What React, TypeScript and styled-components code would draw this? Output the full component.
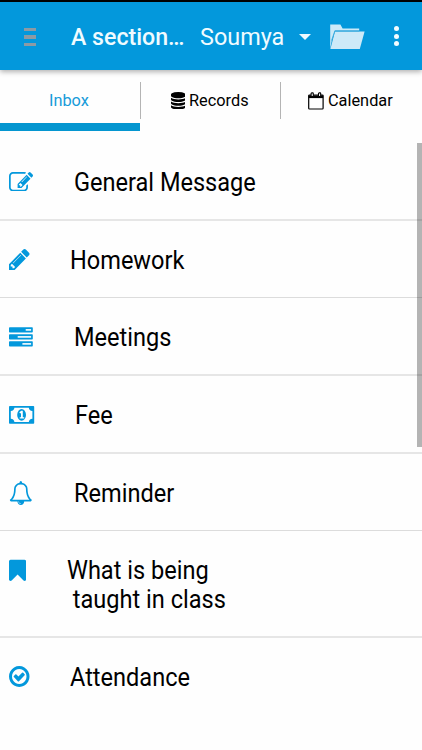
import React from "react";
import styled, { createGlobalStyle } from "styled-components";

const Global = createGlobalStyle`
  * { box-sizing: border-box; }
  body { margin: 0; background: #fff; font-family: Roboto, "Liberation Sans", sans-serif; overflow: hidden; }
  svg { display: block; flex: none; }
`;

const blue = "#0398dc";

const Screen = styled.div`
  width: 422px;
  height: 750px;
  display: flex;
  flex-direction: column;
  overflow: hidden;
  background: #fefefe;
  color: #000;
`;
const StatusStrip = styled.div`
  height: 2px;
  flex: none;
  background: #000;
`;
const AppBar = styled.header`
  height: 68px;
  flex: none;
  display: flex;
  align-items: center;
  padding: 2px 0 0 23.5px;
  background: ${blue};
  color: #f0fbff;
  box-shadow: 0 2px 5px rgba(0, 0, 0, 0.3);
  z-index: 1;
`;
const MenuButton = styled.div`
  width: 12px;
  margin-right: 35px;
  display: grid;
  gap: 4px;
`;
const MenuBar = styled.span`
  height: 3.4px;
  background: #8d9aa3;
`;
const Title = styled.h1`
  margin: 0;
  width: 129.5px;
  font-size: 23.5px;
  line-height: 30px;
  font-weight: 500;
  white-space: nowrap;
  transform: scaleX(0.985);
  transform-origin: left;
`;
const Student = styled.div`
  width: 99px;
  font-size: 24.5px;
  line-height: 30px;
  white-space: nowrap;
  transform: scaleX(0.955);
  transform-origin: left;
`;
const Caret = styled.span`
  border: 6px solid transparent;
  border-top-color: #effaff;
  border-bottom: 0;
  margin-right: 18.5px;
`;
const Dots = styled.div`
  display: grid;
  gap: 2.4px;
  margin: 0 0 2px 29px;
`;
const Dot = styled.span`
  width: 5px;
  height: 5px;
  border-radius: 50%;
  background: #f4fcff;
`;

const Tabs = styled.nav`
  height: 61px;
  flex: none;
  display: grid;
  grid-template-columns: 140px 140px 142px;
  padding-top: 12px;
`;
const Tab = styled.div<{ $active?: boolean }>`
  height: 49px;
  border-bottom: 8px solid ${(p) => (p.$active ? "#0596d0" : "transparent")};
  color: ${(p) => (p.$active ? "#189bd9" : "#000")};
`;
const TabContent = styled.div<{ $divided?: boolean; $start: number; $gap?: number }>`
  height: 37px;
  display: flex;
  align-items: center;
  gap: ${(p) => p.$gap ?? 0}px;
  padding-left: ${(p) => p.$start}px;
  border-left: ${(p) => (p.$divided ? "1px solid #b4b4b4" : "0")};
`;
const TabLabel = styled.span`
  font-size: 17px;
  line-height: 20px;
  padding-bottom: 2px;
  transform: scaleX(0.96);
  transform-origin: left;
`;

const Body = styled.main`
  flex: 1;
  display: flex;
  position: relative;
  padding-top: 12px;
`;
const List = styled.ul`
  flex: 1;
  margin: 0;
  padding: 0;
  list-style: none;
`;
const Row = styled.li<{ $h: number; $line: number }>`
  height: ${(p) => p.$h}px;
  display: flex;
  align-items: flex-start;
  padding: 25px 0 0 9.3px;
  border-bottom: ${(p) => p.$line}px solid ${(p) => (p.$line > 1 ? "#e6e6e6" : "#dcdcdc")};
`;
const IconCell = styled.div<{ $indent: number }>`
  width: ${(p) => p.$indent - 9}px;
  height: 27px;
  flex: none;
  display: flex;
  align-items: center;
  color: ${blue};
`;
const Label = styled.div`
  padding-top: 1px;
  font-size: 25px;
  line-height: 28.7px;
  white-space: pre;
  transform: scaleX(0.942);
  transform-origin: left;
`;
const ScrollThumb = styled.div`
  position: absolute;
  right: 0;
  top: 12px;
  width: 5px;
  height: 304px;
  background: rgba(0, 0, 0, 0.29);
`;

const Glyph = ({ box, w, h, d }: { box: string; w: number; h: number; d: string }) => (
  <svg width={w} height={h} viewBox={box} preserveAspectRatio="none" fill="currentColor">
    <path d={d} />
  </svg>
);

const Edit = () => (
  <Glyph box="0 128 1784 1408" w={24} h={19.5} d="M888 1184l116-116-152-152-116 116v56h96v96h56zm440-720q-16-16-33 1l-350 350q-17 17-1 33t33-1l350-350q17-17 1-33zm80 594v190q0 119-84.5 203.5t-203.5 84.5h-832q-119 0-203.5-84.5t-84.5-203.5v-832q0-119 84.5-203.5t203.5-84.5h832q63 0 117 25 15 7 18 23 3 17-9 29l-49 49q-14 14-32 8-23-6-45-6h-832q-66 0-113 47t-47 113v832q0 66 47 113t113 47h832q66 0 113-47t47-113v-126q0-13 9-22l64-64q15-15 35-7t20 29zm-96-738l288 288-672 672h-288v-288zm444 132l-92 92-288-288 92-92q28-28 68-28t68 28l152 152q28 28 28 68t-28 68z" />
);
const Pencil = () => (
  <Glyph box="128 149 1515 1515" w={20.5} h={21} d="M491 1536l91-91-235-235-91 91v107h128v128h107zm523-928q0-22-22-22-10 0-17 7l-542 542q-7 7-7 17 0 22 22 22 10 0 17-7l542-542q7-7 7-17zm-54-192l416 416-832 832h-416v-416zm683 96q0 53-37 90l-166 166-416-416 166-165q36-38 90-38 53 0 91 38l235 234q37 39 37 91z" />
);
const Bell = () => (
  <Glyph box="0 0 1728 1792" w={22.8} h={24} d="M912 1696q0-16-16-16-59 0-101.5-42.5t-42.5-101.5q0-16-16-16t-16 16q0 73 51.5 124.5t124.5 51.5q16 0 16-16zm-666-288h1300q-266-300-266-832 0-51-24-105t-69-103-121.5-80.5-169.5-31.5-169.5 31.5-121.5 80.5-69 103-24 105q0 532-266 832zm1482 0q0 52-38 90t-90 38h-448q0 106-75 181t-181 75-181-75-75-181h-448q-52 0-90-38t-38-90q50-42 91-88t85-119.5 74.5-158.5 50-206 19.5-260q0-152 117-282.5t307-158.5q-8-19-8-39 0-40 28-68t68-28 68 28 28 68q0 20-8 39 190 28 307 158.5t117 282.5q0 139 19.5 260t50 206 74.5 158.5 85 119.5 91 88z" />
);
const Bookmark = () => (
  <Glyph box="256 68 1280 1573" w={17.2} h={22} d="M1420 128q23 0 44 9 33 13 52.5 41t19.5 62v1289q0 34-19.5 62t-52.5 41q-19 8-44 8-48 0-83-32l-441-424-441 424q-36 33-83 33-23 0-44-9-33-13-52.5-41t-19.5-62v-1289q0-34 19.5-62t52.5-41q21-9 44-9h1048z" />
);
const Check = () => (
  <Glyph box="128 128 1536 1536" w={20.5} h={21} d="M1299 813l-422 422q-19 19-45 19t-45-19l-294-294q-19-19-19-45t19-45l102-102q19-19 45-19t45 19l147 147 275-275q19-19 45-19t45 19l102 102q19 19 19 45t-19 45zm141 83q0-148-73-273t-198-198-273-73-273 73-198 198-73 273 73 273 198 198 273 73 273-73 198-198 73-273zm224 0q0 209-103 385.5t-279.5 279.5-385.5 103-385.5-103-279.5-279.5-103-385.5 103-385.5 279.5-279.5 385.5-103 385.5 103 279.5 279.5 103 385.5z" />
);
const Database = () => (
  <Glyph box="128 0 1536 1792" w={14.5} h={17.5} d="M896 768q237 0 443-43t325-127v170q0 69-103 128t-280 93.5-385 34.5-385-34.5-280-93.5-103-128v-170q119 84 325 127t443 43zm0 768q237 0 443-43t325-127v170q0 69-103 128t-280 93.5-385 34.5-385-34.5-280-93.5-103-128v-170q119 84 325 127t443 43zm0-384q237 0 443-43t325-127v170q0 69-103 128t-280 93.5-385 34.5-385-34.5-280-93.5-103-128v-170q119 84 325 127t443 43zm0-1152q208 0 385 34.5t280 93.5 103 128v128q0 69-103 128t-280 93.5-385 34.5-385-34.5-280-93.5-103-128v-128q0-69 103-128t280-93.5 385-34.5z" />
);
const Tasks = () => (
  <svg width="24" height="20" viewBox="0 0 24 20">
    <g fill="currentColor">
      <rect x="0" y=".2" width="23.8" height="5.4" rx=".8" />
      <rect x="0" y="7.2" width="23.8" height="5.4" rx=".8" />
      <rect x="0" y="14.2" width="23.8" height="5.4" rx=".8" />
    </g>
    <g fill="#fefefe">
      <rect x="16.7" y="2.1" width="5.4" height="1.6" />
      <rect x="8.7" y="9.1" width="13.4" height="1.6" />
      <rect x="13.4" y="16.1" width="8.7" height="1.6" />
    </g>
  </svg>
);
const Money = () => (
  <svg width="26" height="18" viewBox="0 0 26 18">
    <rect width="25.2" height="17.8" rx=".8" fill="currentColor" />
    <path d="M5.4 1.7h14.4q.3 3 3.6 3.4v7.6q-3.3.4-3.6 3.4H5.4q-.3-3-3.6-3.4V5.1q3.3-.4 3.6-3.4z" fill="#fefefe" />
    <ellipse cx="12.6" cy="8.9" rx="4.4" ry="5.9" fill="currentColor" />
    <path d="M10.3 6.3l2-1.6h1.5v6.5h1.4v1.4h-4.5v-1.4H12V6.9l-.9.7z" fill="#fefefe" />
  </svg>
);
const Calendar = () => (
  <svg width="16" height="18" viewBox="0 0 16 18" fill="none" stroke="currentColor">
    <rect x=".7" y="3" width="14.4" height="14" rx=".8" strokeWidth="1.2" />
    <path d="M.6 4.7h14.6" strokeWidth="2.8" />
    <rect x="3.1" y=".9" width="2.2" height="3.6" rx=".7" fill="#fefefe" strokeWidth="1.1" />
    <rect x="10.5" y=".9" width="2.2" height="3.6" rx=".7" fill="#fefefe" strokeWidth="1.1" />
  </svg>
);
const Folder = () => (
  <svg width="35" height="26" viewBox="0 0 35 26">
    <path d="M.2 25V.4h10.2l2.2 4h16.6v2.2H4.8L1.8 16z" fill="#cdeaf8" />
    <path d="M5 7.5h29.6L29.8 25H.4z" fill="#cdeaf8" />
    <path d="M1.6 16.5L4.8 7.1h24.6" fill="none" stroke="#3fadde" strokeWidth=".9" />
  </svg>
);

const items = [
  { label: "General Message", icon: <Edit />, indent: 73.9, h: 78, line: 2 },
  { label: "Homework", icon: <Pencil />, indent: 70.2, h: 77, line: 1 },
  { label: "Meetings", icon: <Tasks />, indent: 73.6, h: 78, line: 2 },
  { label: "Fee", icon: <Money />, indent: 75.2, h: 78, line: 2 },
  { label: "Reminder", icon: <Bell />, indent: 73.6, h: 77, line: 1 },
  { label: "What is being\n taught in class", icon: <Bookmark />, indent: 67.2, h: 107, line: 2 },
  { label: "Attendance", icon: <Check />, indent: 70.2, h: 90, line: 0 },
];

export default function App() {
  return (
    <Screen>
      <Global />
      <StatusStrip />
      <AppBar>
        <MenuButton>
          <MenuBar />
          <MenuBar />
          <MenuBar />
        </MenuButton>
        <Title>A section…</Title>
        <Student>Soumya</Student>
        <Caret />
        <Folder />
        <Dots>
          <Dot />
          <Dot />
          <Dot />
        </Dots>
      </AppBar>
      <Tabs>
        <Tab $active>
          <TabContent $start={49}>
            <TabLabel>Inbox</TabLabel>
          </TabContent>
        </Tab>
        <Tab>
          <TabContent $divided $start={29.5} $gap={4}>
            <Database />
            <TabLabel>Records</TabLabel>
          </TabContent>
        </Tab>
        <Tab>
          <TabContent $divided $start={27} $gap={3.6}>
            <Calendar />
            <TabLabel>Calendar</TabLabel>
          </TabContent>
        </Tab>
      </Tabs>
      <Body>
        <List>
          {items.map((it) => (
            <Row key={it.label} $h={it.h} $line={it.line}>
              <IconCell $indent={it.indent}>{it.icon}</IconCell>
              <Label>{it.label}</Label>
            </Row>
          ))}
        </List>
        <ScrollThumb />
      </Body>
    </Screen>
  );
}
